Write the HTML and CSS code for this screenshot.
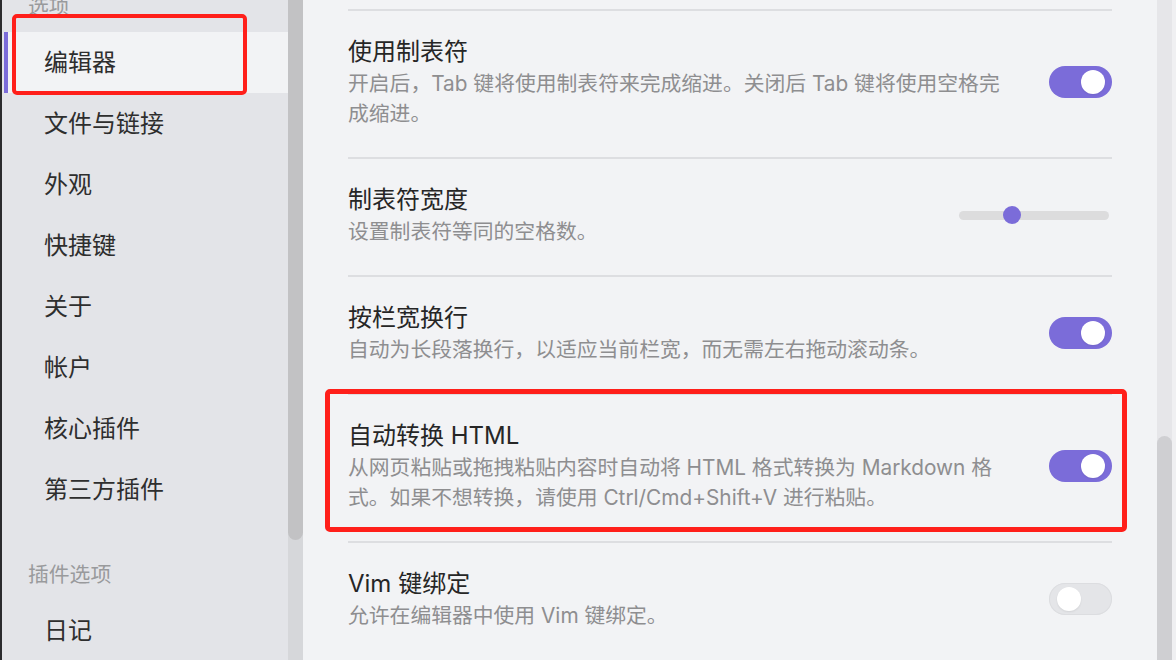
FILE: index.html
```html
<!DOCTYPE html>
<html lang="zh-CN">
<head>
<meta charset="utf-8">
<title>设置 - 编辑器</title>
<link rel="stylesheet" href="styles.css">
</head>
<body>
<div class="app">
  <div class="edge"></div>
  <aside class="sidebar">
    <nav class="nav">
      <div class="nav-header first">选项</div>
      <div class="nav-item active">编辑器</div>
      <div class="nav-item">文件与链接</div>
      <div class="nav-item">外观</div>
      <div class="nav-item">快捷键</div>
      <div class="nav-item">关于</div>
      <div class="nav-item">帐户</div>
      <div class="nav-item">核心插件</div>
      <div class="nav-item">第三方插件</div>
      <div class="nav-header">插件选项</div>
      <div class="nav-item">日记</div>
    </nav>
  </aside>
  <div class="scrollbar side-scroll"><div class="thumb"></div></div>
  <main class="content">
    <div class="setting">
      <div class="info">
        <div class="name">使用制表符</div>
        <div class="desc">开启后，Tab 键将使用制表符来完成缩进。关闭后 Tab 键将使用空格完<br>成缩进。</div>
      </div>
      <div class="toggle on"><span class="knob"></span></div>
    </div>
    <div class="setting">
      <div class="info">
        <div class="name">制表符宽度</div>
        <div class="desc">设置制表符等同的空格数。</div>
      </div>
      <div class="slider"><span class="slider-thumb"></span></div>
    </div>
    <div class="setting">
      <div class="info">
        <div class="name">按栏宽换行</div>
        <div class="desc">自动为长段落换行，以适应当前栏宽，而无需左右拖动滚动条。</div>
      </div>
      <div class="toggle on"><span class="knob"></span></div>
    </div>
    <div class="setting">
      <div class="info">
        <div class="name">自动转换 HTML</div>
        <div class="desc">从网页粘贴或拖拽粘贴内容时自动将 HTML 格式转换为 Markdown 格<br>式。如果不想转换，请使用 Ctrl/Cmd+Shift+V 进行粘贴。</div>
      </div>
      <div class="toggle on"><span class="knob"></span></div>
    </div>
    <div class="setting">
      <div class="info">
        <div class="name">Vim 键绑定</div>
        <div class="desc">允许在编辑器中使用 Vim 键绑定。</div>
      </div>
      <div class="toggle"><span class="knob"></span></div>
    </div>
  </main>
  <div class="scrollbar main-scroll"><div class="thumb"></div></div>
  <div class="right-strip"></div>
</div>
<div class="mark mark-nav"></div>
<div class="mark mark-setting"></div>
</body>
</html>
```
FILE: styles.css
```css
html, body {
  margin: 0;
  padding: 0;
  height: 660px;
  overflow: hidden;
}
body {
  font-family: "Inter", "Noto Sans CJK SC", sans-serif;
  background: #f2f3f5;
  position: relative;
}
.app {
  display: flex;
  height: 660px;
  overflow: hidden;
}
.edge {
  width: 2px;
  background: #2b2b2d;
  flex: none;
}
.sidebar {
  width: 286px;
  flex: none;
  background: #e3e4e8;
  overflow: hidden;
}
.nav {
  display: flex;
  flex-direction: column;
}
.nav-header {
  padding: 40px 0 10px 26px;
  font-size: 20.8px;
  line-height: 30px;
  color: #999a9c;
}
.nav-header.first {
  padding-top: 0;
  margin-top: -8px;
}
.nav-item {
  height: 61px;
  line-height: 61px;
  margin-left: 2px;
  border-left: 4px solid transparent;
  padding-left: 36px;
  font-size: 24px;
  color: #2e2e2e;
}
.nav-item.active {
  border-left-color: #7b6cd9;
  background: #f2f3f5;
}
.scrollbar {
  width: 15px;
  flex: none;
  display: flex;
  flex-direction: column;
}
.side-scroll {
  background: #d6d7da;
}
.side-scroll .thumb {
  height: 540px;
  background: #c2c2c4;
  border-radius: 0 0 8px 8px;
}
.content {
  flex: 1;
  background: #f2f3f5;
  padding: 9px 45px 0 45px;
  overflow: hidden;
}
.setting {
  display: flex;
  align-items: center;
  border-top: 2px solid #dddee1;
  padding: 24px 0 28px;
}
.info {
  flex: 1;
  min-width: 0;
}
.name {
  font-size: 24px;
  line-height: 34px;
  color: #262626;
}
.desc {
  font-size: 20.8px;
  line-height: 30px;
  color: #8e8e90;
  white-space: nowrap;
}
.toggle {
  width: 63px;
  height: 32px;
  border-radius: 16px;
  background: #e4e5e8;
  box-shadow: inset 0 0 0 1px #dcdde0;
  display: flex;
  align-items: center;
  padding: 0 8px;
  box-sizing: border-box;
  flex: none;
  margin-left: 30px;
}
.toggle .knob {
  width: 24px;
  height: 24px;
  border-radius: 50%;
  background: #fff;
  box-shadow: 0 1px 2px rgba(0,0,0,0.08);
}
.toggle.on {
  background: #7b6cd9;
  box-shadow: none;
  justify-content: flex-end;
  padding-right: 7px;
}
.slider {
  width: 150px;
  height: 9px;
  border-radius: 5px;
  background: #dcdcdd;
  margin-right: 3px;
  flex: none;
  display: flex;
  align-items: center;
  padding-left: 44px;
  box-sizing: border-box;
}
.slider-thumb {
  width: 18px;
  height: 18px;
  border-radius: 50%;
  background: #7b6cd9;
}
.main-scroll {
  background: #e6e6e9;
  justify-content: flex-end;
}
.main-scroll .thumb {
  height: 224px;
  background: #cfcfd2;
  border-radius: 8px 8px 0 0;
}
.right-strip {
  width: 4px;
  flex: none;
  background: #f0f0f2;
}
.mark {
  position: absolute;
  border: 4px solid #ff1f1a;
  border-radius: 5px;
  box-sizing: border-box;
}
.mark-nav {
  left: 12px;
  top: 14px;
  width: 235px;
  height: 81px;
}
.mark-setting {
  left: 325px;
  top: 389px;
  width: 802px;
  height: 143px;
  border-width: 5px;
}
```
